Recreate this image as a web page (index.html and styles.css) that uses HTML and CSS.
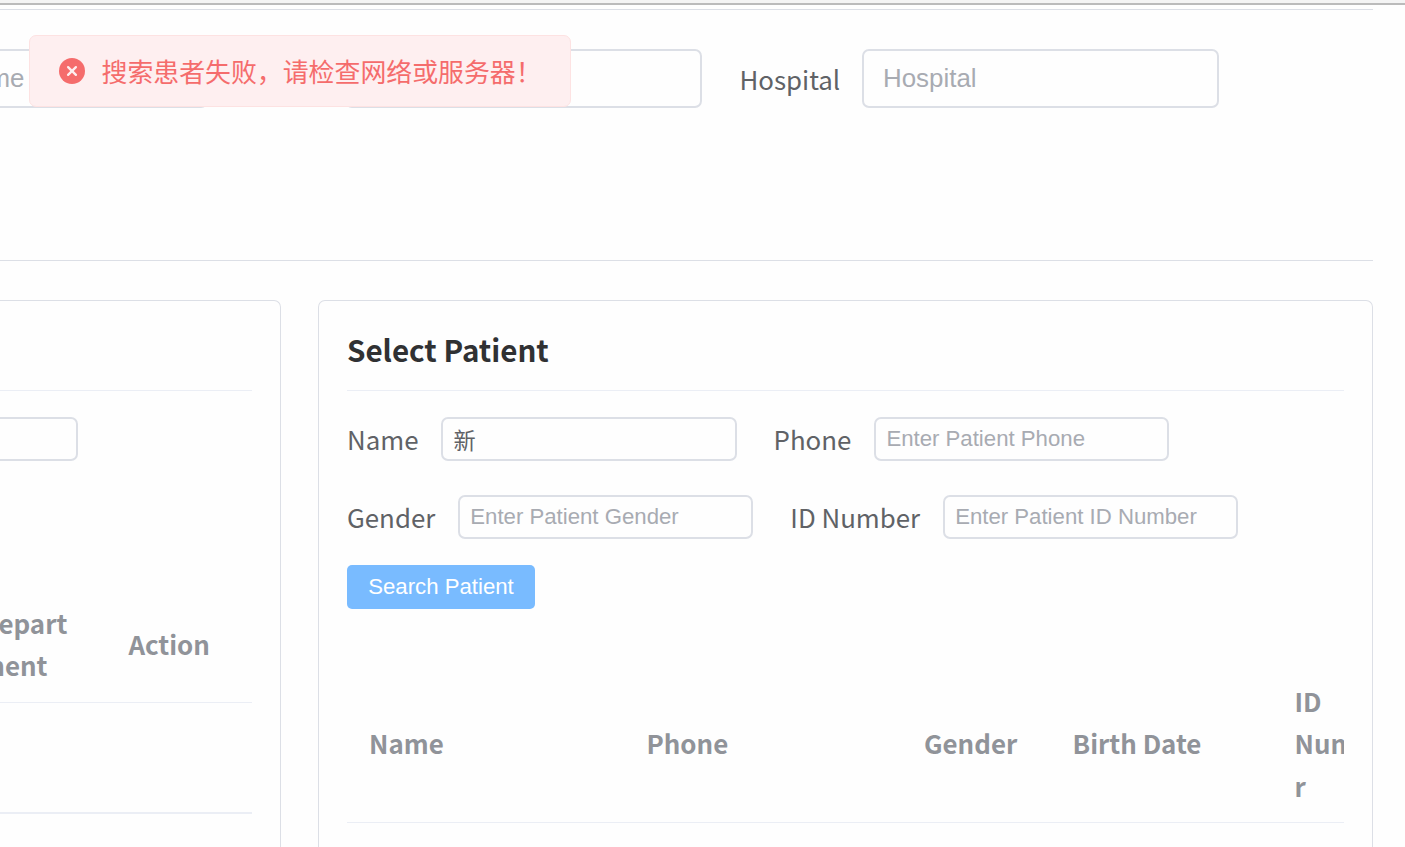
FILE: index.html
```html
<!DOCTYPE html>
<html lang="zh-CN">
<head>
<meta charset="utf-8">
<title>Select Patient</title>
<link rel="stylesheet" href="styles.css">
</head>
<body>
<div class="topbar"></div>
<main class="page">
  <section class="filters">
    <input class="input input-lg" placeholder="Doctor Name">
    <input class="input input-lg field-department">
    <label class="label label-hospital">Hospital</label>
    <input class="input input-lg" placeholder="Hospital">
  </section>
  <div class="panels">
    <section class="card card-doctor">
      <h2 class="card-title"></h2>
      <div class="doctor-form"><input class="input doctor-input"></div>
      <div class="doctor-head">
        <div class="th th-department">Depart<br>ment</div>
        <div class="th th-action">Action</div>
      </div>
      <div class="doctor-body"></div>
    </section>
    <section class="card card-patient">
      <h2 class="card-title">Select Patient</h2>
      <div class="form-row">
        <label class="label">Name</label><input class="input" value="新">
        <label class="label label-next">Phone</label><input class="input" placeholder="Enter Patient Phone">
      </div>
      <div class="form-row">
        <label class="label">Gender</label><input class="input" placeholder="Enter Patient Gender">
        <label class="label label-next">ID Number</label><input class="input" placeholder="Enter Patient ID Number">
      </div>
      <button class="button">Search Patient</button>
      <div class="patient-head">
        <div class="th">Name</div>
        <div class="th">Phone</div>
        <div class="th">Gender</div>
        <div class="th">Birth Date</div>
        <div class="th">ID<br>Numbe<br>r</div>
      </div>
    </section>
  </div>
</main>
<div class="toast">
  <svg class="toast-icon" viewBox="0 0 26 26"><circle cx="13" cy="13" r="13" fill="#f56c6c"/><path d="M9.1 9.1l7.8 7.8M16.9 9.1l-7.8 7.8" stroke="#feeff0" stroke-width="2.3" stroke-linecap="round"/></svg>
  <span class="toast-text">搜索患者失败，请检查网络或服务器！</span>
</div>
</body>
</html>
```
FILE: styles.css
```css
* { box-sizing: border-box; }
html, body { height: 100%; }
body {
  display: flex;
  flex-direction: column;
  margin: 0;
  overflow: hidden;
  background: #fefefe;
  color: #606266;
  font-family: "Noto Sans CJK SC", sans-serif;
}
.topbar { flex: none; height: 5px; background: #f4f4f4; border-bottom: 2px solid #bbb; }
.page {
  display: flex;
  flex: 1;
  flex-direction: column;
  width: 1373px;
  min-height: 0;
  padding-top: 4px;
}
.filters {
  display: flex;
  flex: none;
  align-items: flex-start;
  height: 252px;
  padding-top: 39px;
  border-top: 1px solid #dcdfe6;
  border-bottom: 1px solid #dcdfe6;
}
.filters .input:first-child { margin-left: -149px; }
.input {
  flex: none;
  width: 295.6px;
  height: 44px;
  margin: 0;
  padding: 0 10.5px;
  border: 2px solid #dcdfe6;
  border-radius: 7px;
  outline: none;
  background: #fefefe;
  color: #606266;
  font: 22.2px "Liberation Sans", "Noto Sans CJK SC", sans-serif;
}
.input::placeholder { color: #a8abb2; opacity: 1; }
.input-lg { width: 357px; height: 59px; padding: 0 19px; font-size: 25.9px; }
.filters .field-department { margin-left: 137px; }
.label { flex: none; font-size: 25.85px; line-height: 44px; white-space: nowrap; }
.label-hospital { width: 122.5px; margin-left: 37.5px; line-height: 59px; }
.panels { display: flex; flex: 1; gap: 37px; min-height: 0; margin-top: 39px; }
.card {
  overflow: hidden;
  border: 1px solid #dcdfe6;
  border-bottom: 0;
  border-radius: 7px 7px 0 0;
  padding: 0 28px;
}
.card-doctor { width: 281px; padding-left: 0; border-left: 0; border-top-left-radius: 0; }
.card-patient { width: 1055px; }
.card-title {
  height: 90px;
  margin: 0 0 26px;
  padding-top: 26px;
  border-bottom: 1px solid #ebeef5;
  color: #303133;
  font-size: 29.55px;
  font-weight: 700;
  line-height: 46px;
}
.doctor-form { height: 172px; }
.doctor-input { width: 79px; margin-left: -1px; border-left: 0; border-radius: 0 7px 7px 0; }
.doctor-head {
  display: flex;
  align-items: center;
  height: 114px;
  padding-bottom: 3px;
  border-bottom: 1px solid #ebeef5;
}
.th { color: #909399; font-size: 25.9px; font-weight: 700; line-height: 42.4px; white-space: nowrap; }
.th-department { width: 148.4px; margin-left: -20px; }
.doctor-body { height: 111px; border-bottom: 2px solid #ebeef5; }
.form-row { display: flex; height: 78px; }
.form-row .label { margin-right: 22.5px; }
.form-row .label-next { margin-left: 37px; }
.button {
  display: block;
  width: 188px;
  height: 44px;
  margin: -8px 0 0;
  padding: 0;
  border: 0;
  border-radius: 5px;
  background: #79bbff;
  color: #fff;
  font: 22.2px "Liberation Sans", sans-serif;
}
.patient-head {
  display: grid;
  grid-template-columns: 277.5px 277.5px 148.5px 222px 160px;
  align-items: center;
  height: 156px;
  margin-top: 58px;
  padding: 0 0 2px 22px;
  overflow: hidden;
  border-bottom: 1px solid #ebeef5;
}
.toast {
  position: absolute;
  top: 35px;
  left: 29px;
  display: flex;
  align-items: center;
  width: 542px;
  height: 72px;
  padding: 0 29px;
  border: 1px solid #fde2e2;
  border-radius: 7px;
  background: #feeff0;
  color: #f56c6c;
  font-size: 25.9px;
  white-space: nowrap;
}
.toast-icon { flex: none; width: 26px; height: 26px; margin-right: 16.5px; }
.toast-text { padding-bottom: 2px; }
```
